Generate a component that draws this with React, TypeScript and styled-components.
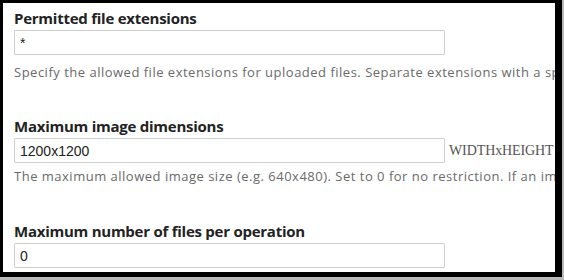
import React from 'react'
import styled, { createGlobalStyle } from 'styled-components'

const GlobalStyle = createGlobalStyle`
  html, body {
    margin: 0;
    padding: 0;
    background: #b9b9b9;
  }
`

const Page = styled.div`
  width: 564px;
  height: 280px;
  box-sizing: border-box;
  padding: 0 2px 3px 0;
  background: #b9b9b9;
`

const Frame = styled.div`
  width: 100%;
  height: 100%;
  box-sizing: border-box;
  border-style: solid;
  border-color: #000;
  border-width: 3px 7px 5px 3px;
  background: #fff;
  overflow: hidden;
  padding: 6px 0 0 11px;
  font-family: 'Open Sans', 'Noto Sans', sans-serif;
`

const FormItem = styled.div<{ $gap: number }>`
  margin-bottom: ${({ $gap }) => $gap}px;
`

const Label = styled.label`
  display: block;
  font-size: 15px;
  font-weight: 700;
  line-height: 18px;
  color: #222;
  letter-spacing: -0.25px;
  white-space: nowrap;
  margin-bottom: 3px;
`

const FieldRow = styled.div`
  display: flex;
  align-items: center;
  gap: 4px;
  white-space: nowrap;
`

const TextInput = styled.input`
  width: 431px;
  height: 25px;
  box-sizing: border-box;
  flex-shrink: 0;
  margin: 0;
  padding: 0 5px;
  border: 1px solid #cfcfcf;
  border-radius: 1px;
  background: #fff;
  font-family: 'Liberation Sans', Arial, sans-serif;
  font-size: 14px;
  color: #222;
  outline: none;
`

const Suffix = styled.span`
  font-family: 'Liberation Serif', 'DejaVu Serif', serif;
  font-size: 14px;
  letter-spacing: -0.1px;
  color: #555;
`

const Description = styled.div<{ $top: number }>`
  margin-top: ${({ $top }) => $top}px;
  font-size: 13px;
  letter-spacing: 0.5px;
  line-height: 18px;
  color: #6a6a6a;
  white-space: nowrap;
`

export default function App() {
  return (
    <Page>
      <GlobalStyle />
      <Frame>
        <FormItem $gap={36}>
          <Label>Permitted file extensions</Label>
          <FieldRow>
            <TextInput readOnly value="*" />
          </FieldRow>
          <Description $top={8}>
            Specify the allowed file extensions for uploaded files. Separate extensions with a space and do not include the leading dot.
          </Description>
        </FormItem>
        <FormItem $gap={37}>
          <Label>Maximum image dimensions</Label>
          <FieldRow>
            <TextInput readOnly value="1200x1200" />
            <Suffix>WIDTHxHEIGHT</Suffix>
          </FieldRow>
          <Description $top={4}>
            The maximum allowed image size (e.g. 640x480). Set to 0 for no restriction. If an image is larger it will be resized.
          </Description>
        </FormItem>
        <FormItem $gap={0}>
          <Label>Maximum number of files per operation</Label>
          <FieldRow>
            <TextInput readOnly value="0" />
          </FieldRow>
        </FormItem>
      </Frame>
    </Page>
  )
}
